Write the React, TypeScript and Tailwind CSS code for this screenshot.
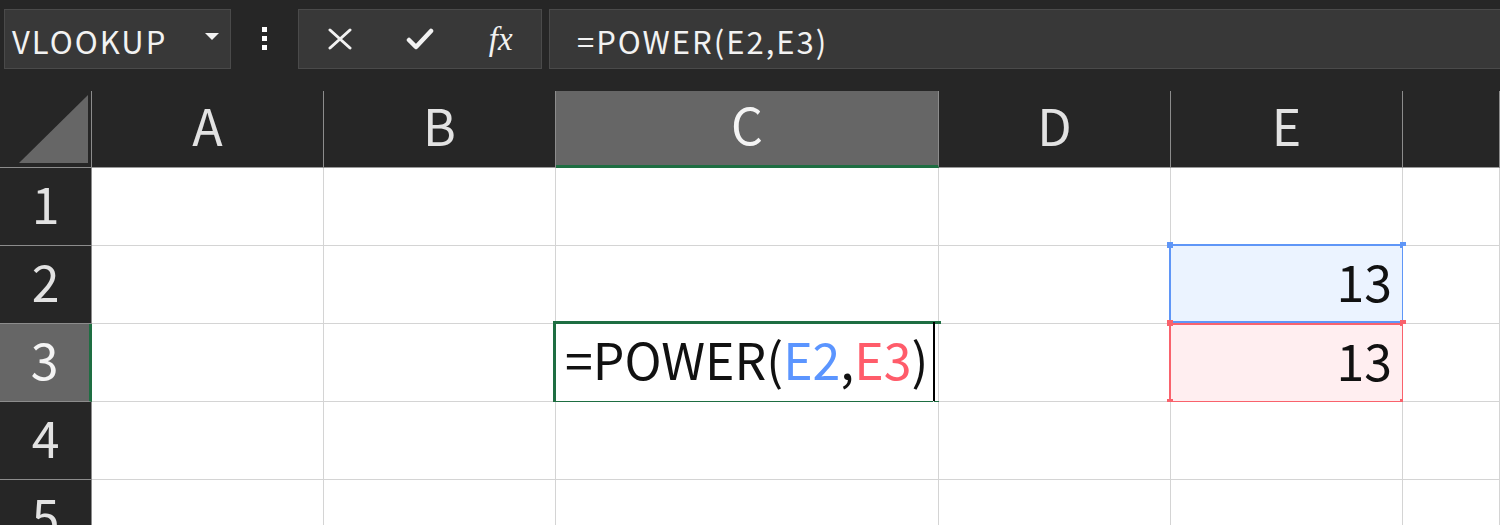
import React from "react";

const FONT = { fontFamily: '"Noto Sans CJK JP", "Noto Sans", sans-serif' };

const cols = ["A", "B", "C", "D", "E", "F"];

function Corner() {
  return (
    <div className="relative h-[77px] bg-[#262626] border-r border-b border-[#8c8c8c]">
      <svg className="absolute left-0 top-0" width="92" height="77">
        <polygon points="19,72 88,4 88,72" fill="#666666" />
      </svg>
    </div>
  );
}

function ColHeader({ label, selected }: { label: string; selected?: boolean }) {
  return (
    <div
      className={
        "h-[77px] flex items-center justify-center text-[50px] border-r border-[#8c8c8c] " +
        (selected
          ? "bg-[#666666] text-[#f4f4f4] border-b-[3px] border-b-[#1e6e42]"
          : "bg-[#262626] text-[#e2e2e2] border-b border-b-[#9a9a9a]")
      }
    >
      <span className="leading-none -translate-y-[5px]">{label}</span>
    </div>
  );
}

function RowHeader({ n, selected }: { n: number; selected?: boolean }) {
  return (
    <div
      className={
        "h-[78px] flex items-center justify-center text-[50px] border-b border-[#8c8c8c] " +
        (selected
          ? "bg-[#666666] text-[#f4f4f4] border-r-[3px] border-r-[#1e6e42]"
          : "bg-[#262626] text-[#e2e2e2] border-r border-r-[#8c8c8c]")
      }
    >
      <span className="leading-none -translate-y-[5px]">{n}</span>
    </div>
  );
}

function Cell({ children }: { children?: React.ReactNode }) {
  return <div className="relative h-[78px] bg-white border-r border-b border-[#d4d4d4]">{children}</div>;
}

function Handle({ cls, color }: { cls: string; color: string }) {
  return <div className={"absolute w-[6px] h-[6px] " + cls + " " + color} />;
}

export default function App() {
  const rows = [1, 2, 3, 4, 5];
  return (
    <div className="w-[1500px] h-[525px] overflow-hidden bg-[#262626]" style={FONT}>
      {/* Toolbar */}
      <div className="h-[91px] flex items-start pt-[9px] overflow-hidden">
        <div className="shrink-0 ml-[4px] w-[227px] h-[60px] bg-[#383838] border border-[#4a4a4a] flex items-center justify-between pl-[7px] pr-[11px]">
          <span className="text-[31px] text-[#f2f2f2] leading-none translate-y-[1px] tracking-[2px]">VLOOKUP</span>
          <svg width="14" height="8" viewBox="0 0 14 8" className="-translate-y-[2px]">
            <polygon points="0,0 14,0 7,7" fill="#f2f2f2" />
          </svg>
        </div>
        <div className="shrink-0 w-[67px] h-[60px] flex flex-col items-center justify-center gap-[4px] -translate-y-[1px]">
          <div className="w-[5px] h-[5px] bg-white" />
          <div className="w-[5px] h-[5px] bg-white" />
          <div className="w-[5px] h-[5px] bg-white" />
        </div>
        <div className="shrink-0 w-[244px] h-[60px] bg-[#383838] border border-[#4a4a4a] flex items-center">
          <div className="w-[81px] flex justify-center pl-[2px]">
            <svg width="24" height="22" viewBox="0 0 24 22">
              <path d="M2 2 L22 20 M22 2 L2 20" stroke="#f2f2f2" strokeWidth="3" strokeLinecap="round" />
            </svg>
          </div>
          <div className="w-[81px] flex justify-center">
            <svg width="28" height="22" viewBox="0 0 28 22">
              <path d="M3 12 L10 19 L25 3" stroke="#f2f2f2" strokeWidth="4.5" fill="none" strokeLinecap="round" strokeLinejoin="round" />
            </svg>
          </div>
          <div className="w-[81px] flex justify-center">
            <span
              className="text-[33px] italic text-[#f2f2f2] leading-none"
              style={{ fontFamily: '"Liberation Serif", "DejaVu Serif", serif' }}
            >
              fx
            </span>
          </div>
        </div>
        <div className="shrink-0 ml-[7px] w-[1000px] h-[60px] bg-[#383838] border border-[#4a4a4a] flex items-center pl-[27px]">
          <span className="text-[31px] text-[#f2f2f2] leading-none translate-y-[1px] tracking-[2px]">=POWER(E2,E3)</span>
        </div>
      </div>

      {/* Grid */}
      <div className="grid grid-cols-[92px_232px_232px_383px_232px_232px_1fr]">
        <Corner />
        {cols.map((c) => (
          <ColHeader key={c} label={c === "F" ? "" : c} selected={c === "C"} />
        ))}
        {rows.map((r) => (
          <React.Fragment key={r}>
            <RowHeader n={r} selected={r === 3} />
            {cols.map((c) => {
              if (r === 3 && c === "C") {
                return (
                  <Cell key={c}>
                    <div className="absolute left-[-3px] top-[-3px] w-[388px] h-[3px] bg-[#1e6e42]" />
                    <div className="absolute left-[-3px] top-[-3px] w-[3px] h-[83px] bg-[#1e6e42]" />
                    <div className="absolute left-[-3px] top-[77px] w-[380px] h-[3px] bg-[#1e6e42]" />
                    <div className="absolute left-[378px] top-[77px] w-[8px] h-[5px] bg-[#1e6e42]" />
                    <div className="absolute left-[377px] top-[-2px] w-[2px] h-[79px] bg-black" />
                    <div className="absolute inset-0 flex items-center pl-[9px] text-[50px] leading-none text-[#111]">
                      <div className="-translate-y-[5px] flex">
                        <span>=POWER(</span>
                        <span className="text-[#5b95ff]">E2</span>
                        <span>,</span>
                        <span className="text-[#ff5c6a]">E3</span>
                        <span>)</span>
                      </div>
                    </div>
                  </Cell>
                );
              }
              if (c === "E" && (r === 2 || r === 3)) {
                const blue = r === 2;
                const border = blue ? "border-[#5f96f7]" : "border-[#f9626c]";
                const bg = blue ? "bg-[#ebf3ff]" : "bg-[#ffeef0]";
                const hc = blue ? "bg-[#5f96f7]" : "bg-[#f9626c]";
                return (
                  <Cell key={c}>
                    <div
                      className={
                        "absolute left-[-2px] w-[235px] border-2 flex items-center justify-end pr-[10px] text-[50px] leading-none text-[#111] " +
                        border +
                        " " +
                        bg +
                        (blue ? " top-[-2px] h-[79px]" : " top-[-1px] h-[80px]")
                      }
                    >
                      <span className="-translate-y-[4px]">13</span>
                    </div>
                    <Handle cls="left-[-4px] top-[-4px]" color={hc} />
                    <Handle cls="left-[229px] top-[-4px]" color={hc} />
                    {!blue && <Handle cls="left-[-4px] top-[75px]" color={hc} />}
                    {!blue && <Handle cls="left-[229px] top-[75px]" color={hc} />}
                  </Cell>
                );
              }
              return <Cell key={c} />;
            })}
          </React.Fragment>
        ))}
      </div>
    </div>
  );
}
